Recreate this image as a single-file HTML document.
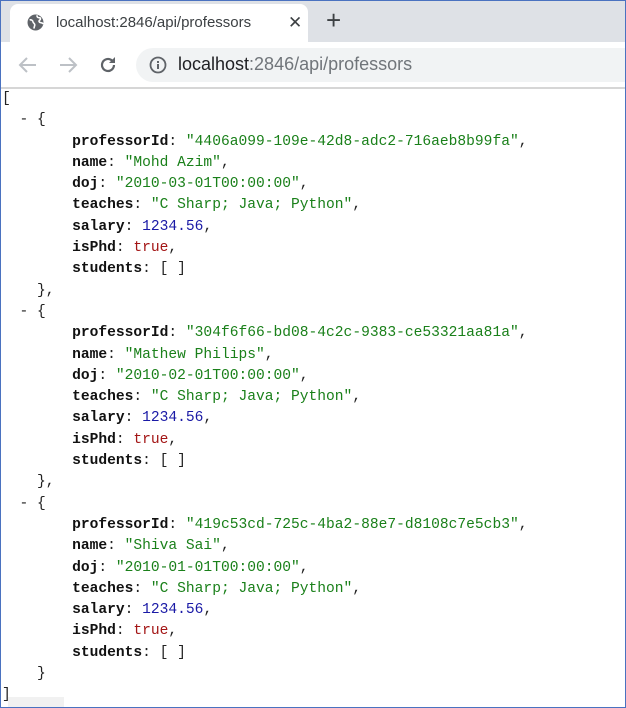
<!DOCTYPE html>
<html><head><style>
html,body{margin:0;padding:0}
body{width:626px;height:708px;position:relative;overflow:hidden;background:#fff;font-family:"Liberation Sans",sans-serif}
.frame{position:absolute;left:0;top:0;width:624px;height:706px;border:1px solid #4a72c0;border-right-width:2px;box-sizing:content-box;pointer-events:none}
.tabbar{position:absolute;left:0;top:0;width:626px;height:42px;background:#dee1e6}
.tab{position:absolute;left:10px;top:4px;width:298px;height:38px;background:#fff;border-radius:8px 8px 0 0}
.tabtitle{position:absolute;left:46px;top:10px;font-size:15px;color:#3c4043}
.x{position:absolute;left:278px;top:9px;font-size:17px;color:#3c4043}
.plus{position:absolute;left:326px;top:5px;font-size:26px;color:#3c4043;font-weight:300}
.toolbar{position:absolute;left:0;top:42px;width:626px;height:45px;background:#fff;border-bottom:2px solid #d6d6d6}
.omni{position:absolute;left:136px;top:6px;width:490px;height:34px;background:#f1f3f4;border-radius:17px 0 0 17px}
.url{position:absolute;left:42px;top:6px;font-size:18px;color:#202124}
.url span{color:#70757a}
pre{position:absolute;left:2px;top:89px;margin:0;font-family:"Liberation Mono",monospace;font-size:14.6px;line-height:21.3px;color:#222}
b{font-weight:bold;color:#111}
.s{color:#1a801a}.n{color:#1a1aa6}.t{color:#a31515}
.bot{position:absolute;left:8px;top:697px;width:56px;height:10px;background:#f1f1f1}
</style></head><body>
<div class="tabbar"><div class="tab">
<svg style="position:absolute;left:17px;top:10px" width="17" height="17" viewBox="0 0 16 16"><circle cx="8" cy="8" r="7.5" fill="#5f6368"/><path d="M2.5 5.5c1.8-.3 3 .6 3.2 2 .2 1.2 1.8 1.3 1.6 3-.1 1-.8 1.8-.6 3.2M9.5 1.2c-.3 1.5.6 2.4 2 2.3 1.4 0 1.6 1.4.4 2.3-1 .8-.6 2.2.8 2.3 1 .1 2 .3 2.6 1.2" stroke="#fff" stroke-width="1.5" fill="none"/></svg>
<div class="tabtitle">localhost:2846/api/professors</div><div class="x">✕</div></div>
<div class="plus">+</div></div>
<div class="toolbar">
<svg style="position:absolute;left:18px;top:14px" width="20" height="18" viewBox="0 0 20 18"><path d="M18 9H3M9 2L2 9l7 7" stroke="#bdc1c6" stroke-width="2" fill="none"/></svg>
<svg style="position:absolute;left:58px;top:14px" width="20" height="18" viewBox="0 0 20 18"><path d="M2 9h15M11 2l7 7-7 7" stroke="#bdc1c6" stroke-width="2" fill="none"/></svg>
<svg style="position:absolute;left:98px;top:13px" width="20" height="20" viewBox="0 0 20 20"><path d="M16 10a6 6 0 1 1-2-4.5" stroke="#5f6368" stroke-width="2.2" fill="none"/><path d="M17 2v6h-6z" fill="#5f6368"/></svg>
<div class="omni">
<svg style="position:absolute;left:13px;top:8px" width="18" height="18" viewBox="0 0 18 18"><circle cx="9" cy="9" r="7.5" stroke="#5f6368" stroke-width="1.8" fill="none"/><rect x="8" y="8" width="2" height="5" fill="#5f6368"/><rect x="8" y="5" width="2" height="2" fill="#5f6368"/></svg>
<div class="url">localhost<span>:2846/api/professors</span></div></div>
</div>
<pre>[
  - {
        <b>professorId</b>: <span class="s">"4406a099-109e-42d8-adc2-716aeb8b99fa"</span>,
        <b>name</b>: <span class="s">"Mohd Azim"</span>,
        <b>doj</b>: <span class="s">"2010-03-01T00:00:00"</span>,
        <b>teaches</b>: <span class="s">"C Sharp; Java; Python"</span>,
        <b>salary</b>: <span class="n">1234.56</span>,
        <b>isPhd</b>: <span class="t">true</span>,
        <b>students</b>: [ ]
    },
  - {
        <b>professorId</b>: <span class="s">"304f6f66-bd08-4c2c-9383-ce53321aa81a"</span>,
        <b>name</b>: <span class="s">"Mathew Philips"</span>,
        <b>doj</b>: <span class="s">"2010-02-01T00:00:00"</span>,
        <b>teaches</b>: <span class="s">"C Sharp; Java; Python"</span>,
        <b>salary</b>: <span class="n">1234.56</span>,
        <b>isPhd</b>: <span class="t">true</span>,
        <b>students</b>: [ ]
    },
  - {
        <b>professorId</b>: <span class="s">"419c53cd-725c-4ba2-88e7-d8108c7e5cb3"</span>,
        <b>name</b>: <span class="s">"Shiva Sai"</span>,
        <b>doj</b>: <span class="s">"2010-01-01T00:00:00"</span>,
        <b>teaches</b>: <span class="s">"C Sharp; Java; Python"</span>,
        <b>salary</b>: <span class="n">1234.56</span>,
        <b>isPhd</b>: <span class="t">true</span>,
        <b>students</b>: [ ]
    }
]</pre>
<div class="bot"></div>
<div class="frame"></div>
</body></html>
